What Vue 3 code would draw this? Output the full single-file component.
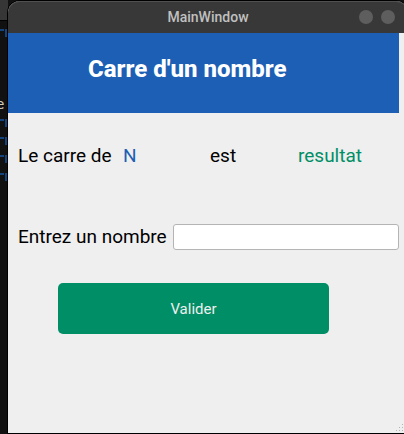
<script setup>
import { ref } from 'vue'

const number = ref('')
const shown = ref('N')
const result = ref('resultat')
const codeMarks = [29, 119, 137, 155, 173]

function validate() {
  const value = Number(number.value)
  if (number.value.trim() === '' || Number.isNaN(value)) return
  shown.value = String(value)
  result.value = String(value * value)
}
</script>

<template>
  <div class="desktop">
    <div class="backdrop" aria-hidden="true">
      <svg class="marks" width="8" height="200" viewBox="0 0 8 200">
        <rect width="8" height="20" fill="#363636" />
        <rect y="20" width="8" height="1" fill="#000" />
        <g v-for="y in codeMarks" :key="y" fill="#14447e">
          <rect x="0" :y="y" width="4" height="2" />
          <rect x="5" :y="y" width="2" height="8" />
        </g>
      </svg>
      <span class="letter">e</span>
    </div>
    <main class="window">
      <header class="titlebar">
        <span class="title">MainWindow</span>
        <div class="controls">
          <button type="button" class="dot" aria-label="Minimize"></button>
          <button type="button" class="dot" aria-label="Maximize"></button>
        </div>
      </header>
      <form class="content" @submit.prevent="validate">
        <h1 class="banner">Carre d'un nombre</h1>
        <p class="sentence">
          <span class="lead">Le carre de</span>
          <output class="n">{{ shown }}</output>
          <span class="is">est</span>
          <output class="result">{{ result }}</output>
        </p>
        <div class="field">
          <label for="number">Entrez un nombre</label>
          <input id="number" v-model="number" type="text" />
        </div>
        <button class="submit" type="submit">Valider</button>
        <svg class="grip" width="8" height="8" viewBox="0 0 8 8" aria-hidden="true">
          <g fill="#b4b4b4">
            <rect x="6" y="0" width="1" height="1" />
            <rect x="3" y="3" width="1" height="1" />
            <rect x="6" y="3" width="1" height="1" />
            <rect x="0" y="6" width="1" height="1" />
            <rect x="3" y="6" width="1" height="1" />
            <rect x="6" y="6" width="1" height="1" />
          </g>
        </svg>
      </form>
    </main>
  </div>
</template>

<style>
body {
  margin: 0;
  background: #111;
}
</style>

<style scoped>
.desktop {
  position: relative;
  display: flex;
  box-sizing: border-box;
  min-height: 100vh;
  padding: 1px 0 1px 8px;
  overflow: hidden;
  background: #111;
  font-family: Roboto, sans-serif;
}

.backdrop {
  position: absolute;
  top: 0;
  bottom: 0;
  left: 0;
  width: 16px;
}

.marks {
  display: block;
}

.letter {
  position: absolute;
  top: 95px;
  left: -4px;
  color: #d0ccc4;
  font: 14px/18px "DejaVu Sans Mono", monospace;
}

/* The window runs slightly past the right edge of the desktop. */
.window {
  position: relative;
  display: flex;
  flex: 1;
  flex-direction: column;
  margin-right: -4px;
  border-radius: 12px 12px 0 0;
  background: #efefef;
  box-shadow: 0 0 0 1px #000;
}

.titlebar {
  display: grid;
  grid-template-columns: 1fr auto 1fr;
  align-items: center;
  height: 32px;
  border-radius: 12px 12px 0 0;
  background: #383838;
  box-shadow: inset 0 1px #505050;
}

.title {
  grid-column: 2;
  color: #c0c0c0;
  font-size: 14px;
  font-weight: 500;
}

.controls {
  display: flex;
  gap: 8px;
  justify-content: flex-end;
  padding-right: 13px;
}

.dot {
  width: 14px;
  height: 14px;
  padding: 0;
  border: 0;
  border-radius: 50%;
  background: #5e5e5e;
}

.content {
  position: relative;
  flex: 1;
  padding-right: 9px;
}

.banner {
  box-sizing: border-box;
  height: 80px;
  margin: 0;
  padding: 20px 80px;
  background: #1c5fb4;
  color: #fff;
  font-size: 24px;
  font-weight: 800;
  line-height: 32px;
  white-space: nowrap;
}

.sentence {
  display: grid;
  grid-template-columns: 105px 87px 88px 1fr;
  margin: 0;
  padding: 30px 0 0 10px;
  color: #000;
  font-size: 19px;
  line-height: 26px;
}

.n {
  color: #1c5fb4;
}

.result {
  color: #008e66;
}

.field {
  display: grid;
  grid-template-columns: 155px 1fr;
  align-items: center;
  padding: 55px 0 0 10px;
  color: #000;
  font-size: 19px;
  line-height: 26px;
}

.field label {
  white-space: nowrap;
}

.field input {
  box-sizing: border-box;
  width: 100%;
  min-width: 0;
  height: 26px;
  padding: 0 4px;
  border: 1px solid #b4b4b4;
  border-radius: 3px;
  outline: none;
  background: #fff;
  font: 15px Roboto, sans-serif;
}

.submit {
  display: block;
  width: calc(100% - 120px);
  height: 51px;
  margin: 33px 70px 0 50px;
  padding: 0;
  border: 0;
  border-radius: 5px;
  background: #008e66;
  color: #efefef;
  font: 15px Roboto, sans-serif;
}

.grip {
  position: absolute;
  right: 4px;
  bottom: 1px;
}
</style>
